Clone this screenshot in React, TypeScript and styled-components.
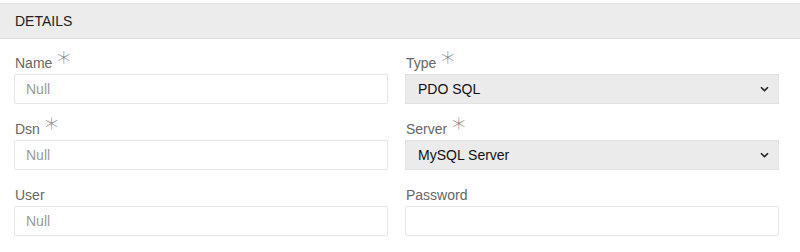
import React from 'react';
import styled, { createGlobalStyle } from 'styled-components';

const GlobalStyle = createGlobalStyle`
    body {
        margin: 0;
        background: #fff;
        font-family: "Liberation Sans", Arial, sans-serif;
    }
`;

const Panel = styled.div`
    padding-top: 3px;
`;

const Header = styled.div`
    height: 34px;
    background: #ececec;
    border-top: 1px solid #e4e4e4;
    border-bottom: 1px solid #dedede;
    display: flex;
    align-items: center;
    padding-left: 15px;
    font-size: 14px;
    color: #222;
`;

const Grid = styled.div`
    display: grid;
    grid-template-columns: 374px 374px;
    column-gap: 17px;
    row-gap: 15px;
    padding: 14px 0 0 14px;
`;

const Field = styled.div`
    display: flex;
    flex-direction: column;
`;

const Label = styled.label`
    height: 21px;
    display: flex;
    align-items: flex-end;
    padding-left: 1px;
    padding-bottom: 3px;
    box-sizing: border-box;
    font-size: 14px;
    color: #666;
`;

const Star = styled.span`
    font-family: "Noto Sans CJK JP", sans-serif;
    font-weight: 100;
    font-size: 17px;
    color: #888;
    margin-left: 3px;
    position: relative;
    top: -6px;
    line-height: 1;
`;

const Input = styled.input`
    height: 30px;
    box-sizing: border-box;
    border: 1px solid #e6e6e6;
    border-radius: 2px;
    padding: 0 11px;
    font-family: inherit;
    font-size: 14px;
    color: #333;
    outline: none;
    &::placeholder {
        color: #9a9a9a;
    }
`;

const SelectBox = styled.div`
    height: 30px;
    box-sizing: border-box;
    border: 1px solid #e2e2e2;
    background: #ebebeb;
    display: flex;
    align-items: center;
    justify-content: space-between;
    padding: 0 9px 0 12px;
    font-size: 14px;
    color: #111;
`;

const Chevron = () => (
    <svg width="9" height="6" viewBox="0 0 9 6">
        <path d="M1 1.2 L4.5 4.6 L8 1.2" fill="none" stroke="#222" strokeWidth="1.6" />
    </svg>
);

type FieldDef = { label: string; required?: boolean; kind: 'input' | 'select'; value?: string; placeholder?: string };

const fields: FieldDef[] = [
    { label: 'Name', required: true, kind: 'input', placeholder: 'Null' },
    { label: 'Type', required: true, kind: 'select', value: 'PDO SQL' },
    { label: 'Dsn', required: true, kind: 'input', placeholder: 'Null' },
    { label: 'Server', required: true, kind: 'select', value: 'MySQL Server' },
    { label: 'User', kind: 'input', placeholder: 'Null' },
    { label: 'Password', kind: 'input' },
];

export default function App() {
    return (
        <>
            <GlobalStyle />
            <Panel>
                <Header>DETAILS</Header>
                <Grid>
                    {fields.map(f => (
                        <Field key={f.label}>
                            <Label>
                                {f.label}
                                {f.required && <Star>＊</Star>}
                            </Label>
                            {f.kind === 'select' ? (
                                <SelectBox>
                                    {f.value}
                                    <Chevron />
                                </SelectBox>
                            ) : (
                                <Input placeholder={f.placeholder} type={f.label === 'Password' ? 'password' : 'text'} />
                            )}
                        </Field>
                    ))}
                </Grid>
            </Panel>
        </>
    );
}
